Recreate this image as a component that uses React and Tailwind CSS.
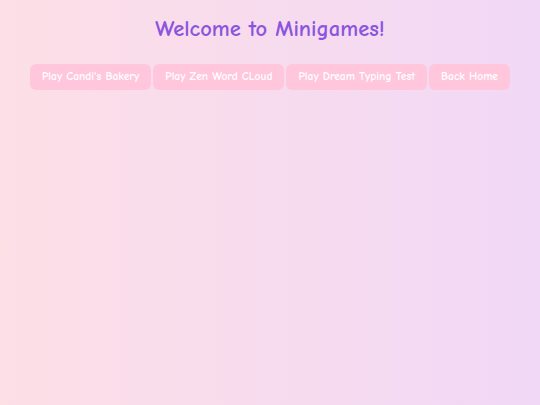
export default function App() {
  const games = ["Play Candi's Bakery", "Play Zen Word CLoud", "Play Dream Typing Test", "Back Home"];

  return (
    <div
      className="min-h-[405px] w-full bg-gradient-to-r from-[#fddfe6] to-[#f1d8f6] pt-[14px]"
      style={{ fontFamily: '"Comic Sans MS", "Comic Neue", "DejaVu Sans", sans-serif' }}
    >
      <h1 className="text-center text-[22.5px] font-extrabold leading-[30px] text-[#8b55de]">
        Welcome to Minigames!
      </h1>
      <div className="mt-[20px] flex justify-center gap-[2px]">
        {games.map((g) => (
          <button
            key={g}
            className="h-[26px] rounded-[6px] bg-[#ffc6dc] px-[12px] text-[11.5px] font-bold text-white"
          >
            {g}
          </button>
        ))}
      </div>
    </div>
  );
}
